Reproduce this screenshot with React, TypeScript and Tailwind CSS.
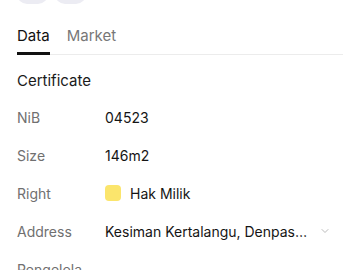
import { ChevronDown } from 'lucide-react';

const rows = [
  { label: 'NiB', value: '04523' },
  { label: 'Size', value: '146m2' },
  { label: 'Right', value: 'Hak Milik', swatch: true },
  { label: 'Address', value: 'Kesiman Kertalangu, Denpasar Timur, Bali', dropdown: true },
  { label: 'Pengelola', value: '' },
];

export default function App() {
  return (
    <div className="w-[360px] h-[270px] overflow-hidden bg-white font-['Inter',sans-serif]">
      {/* Top buttons (scrolled off) */}
      <div className="flex gap-[7px] px-[17px] -mt-[28px]">
        <div className="w-[31px] h-[32px] rounded-[10px] bg-[#ececf3]" />
        <div className="w-[31px] h-[32px] rounded-[10px] bg-[#ececf3]" />
      </div>

      {/* Tabs */}
      <div className="mx-[17px] mt-[19px] flex border-b border-[#ececec]">
        <div className="pb-[5px] border-b-[3px] border-[#111] -mb-px">
          <span className="text-[15px] leading-[20px] text-[#111]">Data</span>
        </div>
        <div className="ml-[17px] pb-[5px]">
          <span className="text-[15px] leading-[20px] text-[#777]">Market</span>
        </div>
      </div>

      {/* Section */}
      <div className="px-[17px] pt-[16px]">
        <div className="text-[15px] leading-[20px] text-[#1a1a1a]">Certificate</div>
        <div className="mt-[7px] flex flex-col">
          {rows.map((r) => (
            <div key={r.label} className="flex items-center h-[38px]">
              <span className="w-[88px] text-[14px] text-[#707070]">{r.label}</span>
              <div className="flex-1 flex items-center min-w-0">
                {r.swatch && <span className="w-[16px] h-[16px] rounded-[4px] bg-[#fbe56c] mr-[9px]" />}
                <span className={`text-[14px] text-[#151515] ${r.dropdown ? 'truncate max-w-[203px]' : ''}`}>{r.value}</span>
                {r.dropdown && <ChevronDown className="ml-auto mr-[12px] w-[12px] h-[12px] text-[#bbb]" strokeWidth={2} />}
              </div>
            </div>
          ))}
        </div>
      </div>
    </div>
  );
}
